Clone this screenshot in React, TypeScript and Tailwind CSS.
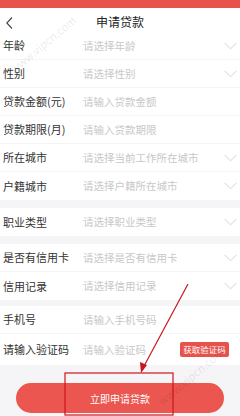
import React from 'react'

interface Field {
  label: string
  placeholder: string
  select?: boolean
}

const groups: Field[][] = [
  [
    { label: '年龄', placeholder: '请选择年龄', select: true },
    { label: '性别', placeholder: '请选择性别', select: true },
    { label: '贷款金额(元)', placeholder: '请输入贷款金额' },
    { label: '贷款期限(月)', placeholder: '请输入贷款期限' },
    { label: '所在城市', placeholder: '请选择当前工作所在城市', select: true },
    { label: '户籍城市', placeholder: '请选择户籍所在城市', select: true },
  ],
  [{ label: '职业类型', placeholder: '请选择职业类型', select: true }],
  [
    { label: '是否有信用卡', placeholder: '请选择是否有信用卡', select: true },
    { label: '信用记录', placeholder: '请选择信用记录', select: true },
  ],
]

function Chevron() {
  return (
    <svg width="13" height="8" viewBox="0 0 13 8" className="shrink-0">
      <polyline points="0.5,0.8 6.5,6.8 12.5,0.8" fill="none" stroke="#d4d4d4" strokeWidth="1" />
    </svg>
  )
}

function Row({ field, last }: { field: Field; last: boolean }) {
  return (
    <div
      className={`flex h-[28px] items-center bg-white pl-[3px] pr-[3px] ${
        last ? '' : 'border-b border-[#f4f4f4]'
      }`}
    >
      <span className="w-[80px] text-[11px] text-[#333]">{field.label}</span>
      <span className="flex-1 text-[10.5px] text-[#c8c8c8]">{field.placeholder}</span>
      {field.select && <Chevron />}
    </div>
  )
}

export default function App() {
  return (
    <div
      className="relative h-[416px] w-[240px] overflow-hidden bg-[#f5f5f7]"
      style={{ fontFamily: '"Noto Sans CJK SC", "Noto Sans", sans-serif' }}
    >
      {/* status bar */}
      <div className="h-[8px] bg-[#e8524c]" />

      {/* header */}
      <div className="relative flex h-[24px] items-end justify-center bg-white pb-[1px]">
        <svg width="7" height="12" viewBox="0 0 7 12" className="absolute left-[6px] top-[9px]">
          <polyline points="6,0.5 0.8,6 6,11.5" fill="none" stroke="#444" strokeWidth="1.1" />
        </svg>
        <span className="text-[12px] text-[#222]">申请贷款</span>
      </div>

      {groups.map((g, gi) => (
        <div key={gi} className={gi > 0 ? 'mt-[8px]' : ''}>
          {g.map((f, i) => (
            <Row key={f.label} field={f} last={i === g.length - 1} />
          ))}
        </div>
      ))}

      {/* phone group */}
      <div className="mt-[6px] bg-white">
        <div className="flex h-[28px] items-center border-b border-[#f4f4f4] pl-[3px]">
          <span className="w-[80px] text-[11px] text-[#333]">手机号</span>
          <span className="text-[10.5px] text-[#c8c8c8]">请输入手机号码</span>
        </div>
        <div className="flex h-[31px] items-center pl-[3px] pr-[11px]">
          <span className="w-[80px] text-[11px] text-[#333]">请输入验证码</span>
          <span className="flex-1 text-[10.5px] text-[#c8c8c8]">请输入验证码</span>
          <span className="flex h-[15px] w-[49px] items-center justify-center rounded-[2px] bg-[#e8524c] text-[8.5px] text-white">
            获取验证码
          </span>
        </div>
      </div>

      <div className="px-[16px] pt-[18px]">
        <div className="flex h-[30px] items-center justify-center rounded-full bg-[#eb5650] text-[10px] text-white">
          立即申请贷款
        </div>
      </div>

      {/* annotation overlay */}
      <svg className="pointer-events-none absolute left-0 top-0" width="240" height="416" viewBox="0 0 240 416">
        <rect x="65" y="373" width="108" height="42" fill="none" stroke="#d0141a" strokeWidth="1.2" />
        <line x1="188" y1="284" x2="143" y2="368" stroke="#c8161d" strokeWidth="1.2" />
        <polygon points="141,373 140,362 147,365" fill="#c8161d" />
      </svg>

      {/* watermark */}
      <span className="pointer-events-none absolute left-[2px] top-[36px] -rotate-[40deg] text-[11px] text-[#000]/10">
        www.vipcn.com
      </span>
      <span className="pointer-events-none absolute left-[150px] top-[368px] -rotate-[40deg] text-[11px] text-[#000]/10">
        www.vipcn.com
      </span>
    </div>
  )
}
